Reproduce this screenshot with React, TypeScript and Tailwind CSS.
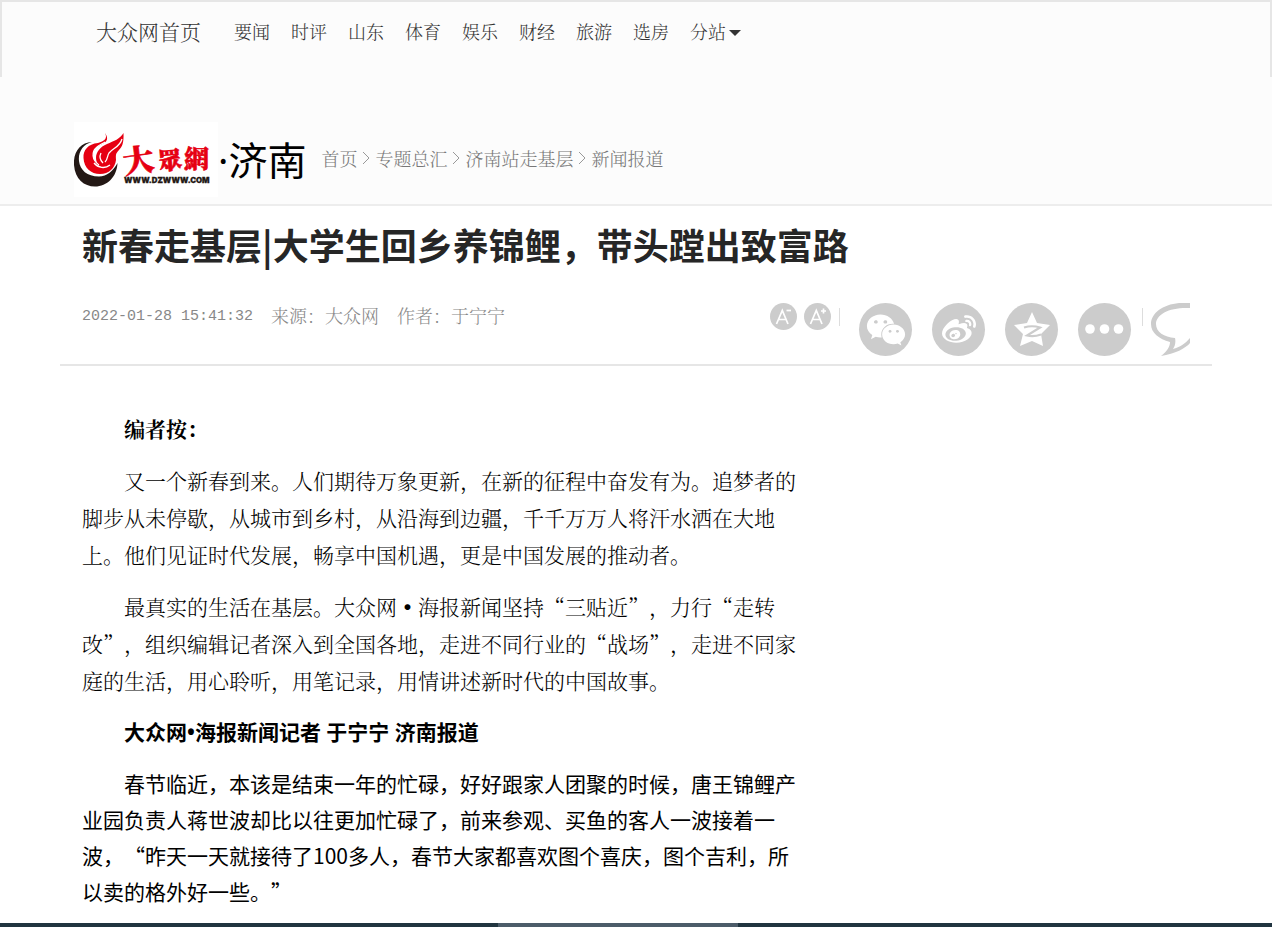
import React from 'react';
import { FaWeixin, FaWeibo } from 'react-icons/fa';

const channels = ['要闻', '时评', '山东', '体育', '娱乐', '财经', '旅游', '选房'];
const crumbs = ['首页', '专题总汇', '济南站走基层', '新闻报道'];

function Logo() {
  return (
    <svg viewBox="0 0 144 75" className="h-[75px] w-36 bg-white" role="img" aria-label="大众网">
      <path d="M18 20C6 20 -1 31 0 43C1 57 10 64.500 21 64.500C33 64.500 43 55 43.500 41C39 49 33 54.500 25 54.500C13 54.500 6 48 5 39C4 30 9 22 18 20Z" fill="#231815" />
      <path d="M31 11C34 17 30 19 24 21C14 22 9 28 9.500 36C10 46 17 52 26 52C35 52 41 46 42 38C42 34 41 32 45 28C48 25 50 21 49.500 11C46 17 40 19 33 22C26 25 22 30 22 36C22 39 23 41 25 43C18 38 17 30 23 25C29 21 37 20 31 11Z" fill="#e60012" />
      <path d="M25 43C18 38 17 30 23 25C25 23 28 22 31 20M20 41C24 46 31 47 36 43M48 17C46 25 39 26 35 31C33 34 34 37 31 40M27 31C25 35 26 38 29 41" fill="none" stroke="#fff" strokeWidth="1.300" />
      <g fill="#e60012" stroke="#e60012" strokeWidth="0.600" className="font-['Noto_Serif_CJK_SC',serif] font-black">
        <text x="49" y="50" fontSize="31" transform="rotate(-8 63 38)">大</text>
        <text x="84" y="47" fontSize="24" transform="rotate(-5 96 38)">眾</text>
        <text x="110" y="46" fontSize="25">網</text>
      </g>
      <text x="50" y="61" fontSize="7.800" fill="#231815" stroke="#231815" strokeWidth="0.300" className="font-['Inter',sans-serif] font-black">WWW.DZWWW.COM</text>
    </svg>
  );
}

function SizeButton({ larger }: { larger?: boolean }) {
  return (
    <button type="button" aria-label={larger ? '放大字号' : '缩小字号'} className="size-[27px] rounded-full bg-[#ccc]">
      <svg viewBox="0 0 27 27" className="size-full" fill="none" stroke="#fff" strokeWidth="1.700">
        <path d="M6.500 21L12.300 7.500L18 21M8.500 16.500H16" />
        <path d={larger ? 'M17 8H22M19.500 5.500V10.500' : 'M16.500 7.500H21'} />
      </svg>
    </button>
  );
}

function Share({ label, children }: { label: string; children: React.ReactNode }) {
  return (
    <a href="#" aria-label={label} className="flex size-[53px] items-center justify-center rounded-full bg-[#ccc] text-white">
      {children}
    </a>
  );
}

export default function App() {
  return (
    <div lang="zh-CN" className="flex min-h-screen flex-col bg-white font-['Noto_Sans_CJK_SC',sans-serif] text-black [text-spacing-trim:space-all]">
      <header className="border-b-2 border-[#ededed] bg-[#fcfcfc] font-['Noto_Serif_CJK_SC',serif] font-light">
        <nav className="h-[77px] border-2 border-b-0 border-[#e6e6e6] pt-[11px] pl-[94px]">
          <div className="flex h-9 items-center text-lg text-[#333]">
            <a href="#" className="mr-[33px] text-[21px]">大众网首页</a>
            <div className="flex gap-[21px]">
              {channels.map((c) => (
                <a key={c} href="#">{c}</a>
              ))}
              <button type="button" className="flex items-center gap-[3px]">
                分站
                <svg viewBox="0 0 12 6" className="mt-1 h-1.5 w-3" fill="#333"><path d="M0 0H12L6 6Z" /></svg>
              </button>
            </div>
          </div>
        </nav>
        <div className="flex items-center px-[74px] pt-[45px] pb-[7px]">
          <a href="#"><Logo /></a>
          <a href="#" className="font-['Noto_Sans','Noto_Sans_CJK_SC',sans-serif] text-[39px] leading-[60px] font-normal">·济南</a>
          <nav className="mb-1 ml-[15px] flex items-center text-lg text-[#777]">
            {crumbs.map((c, i) => (
              <React.Fragment key={c}>
                {i > 0 && (
                  <svg viewBox="0 0 8 14" className="mx-[5px] h-3.5 w-2" fill="none" stroke="#999"><path d="M1 1L7 7L1 13" /></svg>
                )}
                <a href="#">{c}</a>
              </React.Fragment>
            ))}
          </nav>
        </div>
      </header>

      <main className="mx-[60px]">
        <div className="border-b-2 border-[#e6e6e6] px-[22px] pt-[11px] pb-2">
          <h1 className="text-4xl leading-[54px] font-bold text-[#262626]">新春走基层|大学生回乡养锦鲤，带头蹚出致富路</h1>
          <div className="mt-8 flex justify-between">
            <p className="flex h-6 items-center gap-[18px] font-['Noto_Serif_CJK_SC',serif] text-lg leading-6 font-light text-[#888]">
              <time className="pt-1 font-['Liberation_Mono',monospace] text-[15px]">2022-01-28 15:41:32</time>
              <span>来源：大众网</span>
              <span>作者：于宁宁</span>
            </p>
            <div className="flex items-start">
              <div className="flex gap-[7px]">
                <SizeButton />
                <SizeButton larger />
              </div>
              <span className="mt-[5px] ml-2 h-[18px] w-px bg-[#ddd]" />
              <div className="ml-[19px] flex gap-5">
                <Share label="微信"><FaWeixin size={40} /></Share>
                <Share label="微博"><FaWeibo size={34} /></Share>
                <Share label="QQ空间">
                  <svg viewBox="0 0 53 53" className="size-full">
                    <path d="M27 9L32 20L45 22L36 31L38 43L27 38L15 43L18 31L9 22L22 20Z" fill="#fff" />
                    <path d="M19 24.500Q27 22 35 24.500L22 32.500Q29 34 36 31.500" fill="none" stroke="#ccc" strokeWidth="2.200" />
                  </svg>
                </Share>
                <Share label="更多">
                  <svg viewBox="0 0 53 53" className="size-full" fill="#fff">
                    <circle cx="12" cy="26" r="4.800" /><circle cx="26.500" cy="26" r="4.800" /><circle cx="40.500" cy="26" r="4.800" />
                  </svg>
                </Share>
              </div>
              <span className="mt-[5px] ml-[11px] h-[18px] w-px bg-[#ddd]" />
              <a href="#" aria-label="评论" className="ml-2">
                <svg viewBox="0 0 39 53" className="h-[53px] w-[39px]">
                  <path d="M39 0C17 -2 0 8 0 21C0 30 8 36 19 39C19 44 16 48 10 53C24 51 35 45 39 40V35C34 41 29 44 22 46C24 43 25 39 24 35C13 34 5 29 5 21C5 11 19 4 39 5Z" fill="#ccc" />
                </svg>
              </a>
            </div>
          </div>
        </div>

        <article className="box-content flex max-w-[722px] flex-col gap-[15px] px-[22px] pt-11 pb-[13px] text-[21px] leading-9">
          <div className="flex flex-col gap-[15px] font-['Noto_Serif_CJK_SC',serif] leading-[37px] font-light">
            <p className="indent-[2em] font-bold">编者按：</p>
            <p className="indent-[2em]">又一个新春到来。人们期待万象更新，在新的征程中奋发有为。追梦者的脚步从未停歇，从城市到乡村，从沿海到边疆，千千万万人将汗水洒在大地上。他们见证时代发展，畅享中国机遇，更是中国发展的推动者。</p>
            <p className="indent-[2em]">最真实的生活在基层。大众网<span className="font-['Noto_Sans_CJK_SC',sans-serif] font-black">•</span>海报新闻坚持“三贴近”，力行“走转改”，组织编辑记者深入到全国各地，走进不同行业的“战场”，走进不同家庭的生活，用心聆听，用笔记录，用情讲述新时代的中国故事。</p>
          </div>
          <p className="indent-[2em] font-['Open_Sans','Noto_Sans_CJK_SC',sans-serif] font-bold">大众网•海报新闻记者 于宁宁 济南报道</p>
          <p className="indent-[2em]">春节临近，本该是结束一年的忙碌，好好跟家人团聚的时候，唐王锦鲤产业园负责人蒋世波却比以往更加忙碌了，前来参观、买鱼的客人一波接着一波，“昨天一天就接待了100多人，春节大家都喜欢图个喜庆，图个吉利，所以卖的格外好一些。”</p>
        </article>
      </main>

      <footer className="mt-auto flex h-1 justify-center bg-[#213540]">
        <div className="mr-9 w-60 bg-[#4c5c69]" />
      </footer>
    </div>
  );
}
